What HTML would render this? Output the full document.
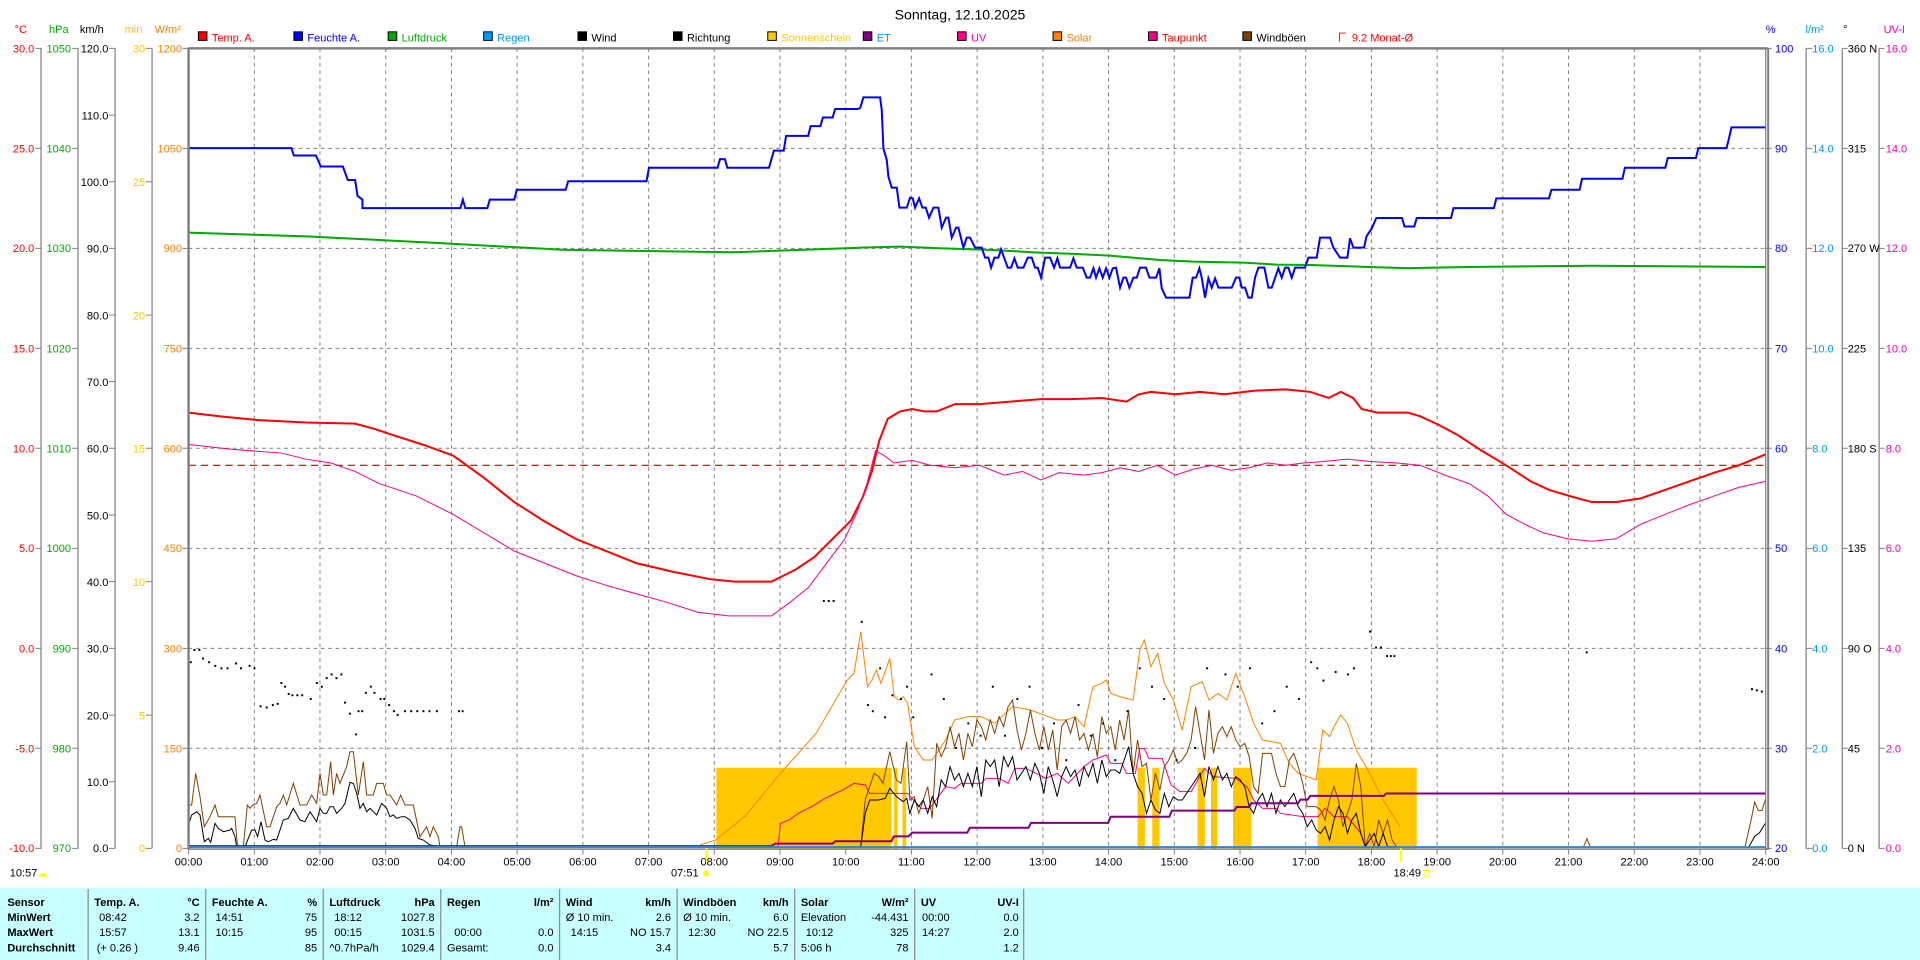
<!DOCTYPE html>
<html><head><meta charset="utf-8"><style>
html,body{margin:0;padding:0;background:#fff;}
svg{display:block;}
text{font-family:"Liberation Sans",sans-serif;font-size:9px;}
.b{font-weight:bold;}
.thin{fill:none;stroke-width:1;vector-effect:non-scaling-stroke;}
.thick{fill:none;stroke-width:2;vector-effect:non-scaling-stroke;}
</style></head><body>
<svg width="1920" height="960" viewBox="0 0 1568 784" xmlns="http://www.w3.org/2000/svg">
<rect width="1568" height="784" fill="#fff"/>
<text x="784" y="16" text-anchor="middle" style="font-size:11.5px">Sonntag, 12.10.2025</text>
<g>
<rect x="162" y="26" width="7" height="7" fill="#f00" stroke="#000" stroke-width="0.8"/><text x="173" y="34" fill="#f00">Temp. A.</text>
<rect x="240" y="26" width="7" height="7" fill="#00f" stroke="#000" stroke-width="0.8"/><text x="251" y="34" fill="#00f">Feuchte A.</text>
<rect x="317" y="26" width="7" height="7" fill="#0a0" stroke="#000" stroke-width="0.8"/><text x="328" y="34" fill="#0a0">Luftdruck</text>
<rect x="395" y="26" width="7" height="7" fill="#09f" stroke="#000" stroke-width="0.8"/><text x="406" y="34" fill="#09f">Regen</text>
<rect x="472" y="26" width="7" height="7" fill="#000" stroke="#000" stroke-width="0.8"/><text x="483" y="34">Wind</text>
<rect x="550" y="26" width="7" height="7" fill="#000" stroke="#000" stroke-width="0.8"/><text x="561" y="34">Richtung</text>
<rect x="627" y="26" width="7" height="7" fill="#ffc800" stroke="#000" stroke-width="0.8"/><text x="638" y="34" fill="#ffc800">Sonnenschein</text>
<rect x="705" y="26" width="7" height="7" fill="#800080" stroke="#000" stroke-width="0.8"/><text x="716" y="34" fill="#09f">ET</text>
<rect x="782" y="26" width="7" height="7" fill="#ff0080" stroke="#000" stroke-width="0.8"/><text x="793" y="34" fill="#f0a">UV</text>
<rect x="860" y="26" width="7" height="7" fill="#ff8000" stroke="#000" stroke-width="0.8"/><text x="871" y="34" fill="#ff8000">Solar</text>
<rect x="938" y="26" width="7" height="7" fill="#ff0080" stroke="#000" stroke-width="0.8"/><text x="949" y="34" fill="#f00">Taupunkt</text>
<rect x="1015" y="26" width="7" height="7" fill="#804000" stroke="#000" stroke-width="0.8"/><text x="1026" y="34">Windböen</text>
<path d="M1094 34V27H1099" fill="none" stroke="#f00" stroke-width="0.8"/><text x="1104" y="34" fill="#f00">9.2 Monat-Ø</text>
</g>
<text x="17" y="27" text-anchor="middle" fill="#f00">°C</text>
<text x="48" y="27" text-anchor="middle" fill="#0a0">hPa</text>
<text x="75" y="27" text-anchor="middle">km/h</text>
<text x="109" y="27" text-anchor="middle" fill="#ffc800">min</text>
<text x="137" y="27" text-anchor="middle" fill="#ff8000">W/m²</text>
<text x="1446" y="27" text-anchor="middle" fill="#00f">%</text>
<text x="1482" y="27" text-anchor="middle" fill="#09f">l/m²</text>
<text x="1507" y="27" text-anchor="middle">°</text>
<text x="1547" y="27" text-anchor="middle" fill="#f0a">UV-I</text>

<g stroke="#808080" stroke-width="1">
<line x1="33.5" y1="39.5" x2="33.5" y2="692.8"/>
<line x1="63.7" y1="39.5" x2="63.7" y2="692.8"/>
<line x1="94" y1="39.5" x2="94" y2="692.8"/>
<line x1="124.2" y1="39.5" x2="124.2" y2="692.8"/>
<line x1="1475" y1="39.5" x2="1475" y2="692.8"/>
<line x1="1504.5" y1="39.5" x2="1504.5" y2="692.8"/>
<line x1="1534.6" y1="39.5" x2="1534.6" y2="692.8"/>
</g>
<g stroke="#808080" stroke-width="0.8" stroke-dasharray="3,3">
<line x1="154" y1="121.2" x2="1442" y2="121.2"/><line x1="154" y1="202.8" x2="1442" y2="202.8"/>
<line x1="154" y1="284.5" x2="1442" y2="284.5"/><line x1="154" y1="366.1" x2="1442" y2="366.1"/>
<line x1="154" y1="447.8" x2="1442" y2="447.8"/><line x1="154" y1="529.5" x2="1442" y2="529.5"/>
<line x1="154" y1="611.1" x2="1442" y2="611.1"/>
<line x1="207.7" y1="39.5" x2="207.7" y2="692.8"/><line x1="261.3" y1="39.5" x2="261.3" y2="692.8"/>
<line x1="315" y1="39.5" x2="315" y2="692.8"/><line x1="368.7" y1="39.5" x2="368.7" y2="692.8"/>
<line x1="422.3" y1="39.5" x2="422.3" y2="692.8"/><line x1="476" y1="39.5" x2="476" y2="692.8"/>
<line x1="529.7" y1="39.5" x2="529.7" y2="692.8"/><line x1="583.3" y1="39.5" x2="583.3" y2="692.8"/>
<line x1="637" y1="39.5" x2="637" y2="692.8"/><line x1="690.7" y1="39.5" x2="690.7" y2="692.8"/>
<line x1="744.3" y1="39.5" x2="744.3" y2="692.8"/><line x1="798" y1="39.5" x2="798" y2="692.8"/>
<line x1="851.7" y1="39.5" x2="851.7" y2="692.8"/><line x1="905.3" y1="39.5" x2="905.3" y2="692.8"/>
<line x1="959" y1="39.5" x2="959" y2="692.8"/><line x1="1012.7" y1="39.5" x2="1012.7" y2="692.8"/>
<line x1="1066.3" y1="39.5" x2="1066.3" y2="692.8"/><line x1="1120" y1="39.5" x2="1120" y2="692.8"/>
<line x1="1173.7" y1="39.5" x2="1173.7" y2="692.8"/><line x1="1227.3" y1="39.5" x2="1227.3" y2="692.8"/>
<line x1="1281" y1="39.5" x2="1281" y2="692.8"/><line x1="1334.7" y1="39.5" x2="1334.7" y2="692.8"/>
<line x1="1388.3" y1="39.5" x2="1388.3" y2="692.8"/>
</g>

<g fill="#f00" text-anchor="end">
<text x="28" y="43">30.0</text><text x="28" y="124.5">25.0</text><text x="28" y="206">20.0</text><text x="28" y="288">15.0</text><text x="28" y="369.5">10.0</text><text x="28" y="451">5.0</text><text x="28" y="533">0.0</text><text x="28" y="614.5">-5.0</text><text x="28" y="696">-10.0</text>
</g>
<g fill="#0a0" text-anchor="end">
<text x="58" y="43">1050</text><text x="58" y="124.5">1040</text><text x="58" y="206">1030</text><text x="58" y="288">1020</text><text x="58" y="369.5">1010</text><text x="58" y="451">1000</text><text x="58" y="533">990</text><text x="58" y="614.5">980</text><text x="58" y="696">970</text>
</g>
<g text-anchor="end">
<text x="88.5" y="43">120.0</text><text x="88.5" y="97.4">110.0</text><text x="88.5" y="151.9">100.0</text><text x="88.5" y="206.3">90.0</text><text x="88.5" y="260.8">80.0</text><text x="88.5" y="315.2">70.0</text><text x="88.5" y="369.6">60.0</text><text x="88.5" y="424.1">50.0</text><text x="88.5" y="478.5">40.0</text><text x="88.5" y="533">30.0</text><text x="88.5" y="587.4">20.0</text><text x="88.5" y="641.8">10.0</text><text x="88.5" y="696">0.0</text>
</g>
<g fill="#ffc800" text-anchor="end">
<text x="118.5" y="43">30</text><text x="118.5" y="151.9">25</text><text x="118.5" y="260.8">20</text><text x="118.5" y="369.6">15</text><text x="118.5" y="478.5">10</text><text x="118.5" y="587.4">5</text><text x="118.5" y="696">0</text>
</g>
<g fill="#ff8000" text-anchor="end">
<text x="148.6" y="43">1200</text><text x="148.6" y="124.5">1050</text><text x="148.6" y="206">900</text><text x="148.6" y="288">750</text><text x="148.6" y="369.5">600</text><text x="148.6" y="451">450</text><text x="148.6" y="533">300</text><text x="148.6" y="614.5">150</text><text x="148.6" y="696">0</text>
</g>
<g stroke="#808080" stroke-width="0.8">
<path d="M29 39.5H34M29 121.2H34M29 202.8H34M29 284.5H34M29 366.1H34M29 447.8H34M29 529.5H34M29 611.1H34M29 692.8H34"/>
<path d="M59 39.5H64M59 121.2H64M59 202.8H64M59 284.5H64M59 366.1H64M59 447.8H64M59 529.5H64M59 611.1H64M59 692.8H64"/>
<path d="M89 39.5H94M89 94H94M89 148.4H94M89 202.8H94M89 257.3H94M89 311.7H94M89 366.1H94M89 420.6H94M89 475H94M89 529.5H94M89 584H94M89 638.4H94M89 692.8H94"/>
<path d="M119 39.5H124M119 148.4H124M119 257.3H124M119 366.1H124M119 475H124M119 584H124M119 692.8H124"/>
<path d="M149 39.5H154M149 121.2H154M149 202.8H154M149 284.5H154M149 366.1H154M149 447.8H154M149 529.5H154M149 611.1H154M149 692.8H154"/>
<path d="M1442 39.5H1447M1442 121.2H1447M1442 202.8H1447M1442 284.5H1447M1442 366.1H1447M1442 447.8H1447M1442 529.5H1447M1442 611.1H1447M1442 692.8H1447"/>
<path d="M1475 39.5H1480M1475 121.2H1480M1475 202.8H1480M1475 284.5H1480M1475 366.1H1480M1475 447.8H1480M1475 529.5H1480M1475 611.1H1480M1475 692.8H1480"/>
<path d="M1504.5 39.5H1509M1504.5 121.2H1509M1504.5 202.8H1509M1504.5 284.5H1509M1504.5 366.1H1509M1504.5 447.8H1509M1504.5 529.5H1509M1504.5 611.1H1509M1504.5 692.8H1509"/>
<path d="M1534.6 39.5H1539M1534.6 121.2H1539M1534.6 202.8H1539M1534.6 284.5H1539M1534.6 366.1H1539M1534.6 447.8H1539M1534.6 529.5H1539M1534.6 611.1H1539M1534.6 692.8H1539"/>
</g>
<g fill="#00f">
<text x="1449.6" y="43">100</text><text x="1449.6" y="124.5">90</text><text x="1449.6" y="206">80</text><text x="1449.6" y="288">70</text><text x="1449.6" y="369.5">60</text><text x="1449.6" y="451">50</text><text x="1449.6" y="533">40</text><text x="1449.6" y="614.5">30</text><text x="1449.6" y="696">20</text>
</g>
<g fill="#09f">
<text x="1480" y="43">16.0</text><text x="1480" y="124.5">14.0</text><text x="1480" y="206">12.0</text><text x="1480" y="288">10.0</text><text x="1480" y="369.5">8.0</text><text x="1480" y="451">6.0</text><text x="1480" y="533">4.0</text><text x="1480" y="614.5">2.0</text><text x="1480" y="696">0.0</text>
</g>
<g>
<text x="1509" y="43">360 N</text><text x="1509" y="124.5">315</text><text x="1509" y="206">270 W</text><text x="1509" y="288">225</text><text x="1509" y="369.5">180 S</text><text x="1509" y="451">135</text><text x="1509" y="533">90  O</text><text x="1509" y="614.5">45</text><text x="1509" y="696">0  N</text>
</g>
<g fill="#f0a">
<text x="1540" y="43">16.0</text><text x="1540" y="124.5">14.0</text><text x="1540" y="206">12.0</text><text x="1540" y="288">10.0</text><text x="1540" y="369.5">8.0</text><text x="1540" y="451">6.0</text><text x="1540" y="533">4.0</text><text x="1540" y="614.5">2.0</text><text x="1540" y="696">0.0</text>
</g>

<g fill="#ffc800">
<rect x="585" y="627" width="143" height="66"/>
<rect x="730" y="627" width="3" height="66"/><rect x="737" y="627" width="3" height="66"/>
<rect x="929" y="627" width="6" height="66"/><rect x="941" y="627" width="6" height="66"/>
<rect x="978" y="627" width="6" height="66"/><rect x="989" y="627" width="5" height="66"/>
<rect x="1007" y="627" width="15" height="66"/>
<rect x="1076" y="627" width="81" height="66"/>
</g>

<line x1="154" y1="380" x2="1442" y2="380" stroke="#c00000" stroke-width="0.9" stroke-dasharray="6,4"/>

<polyline class="thick" stroke="#0a0" points="154,190 250,193 350,198 460,204 600,206 702.4,202.3"/>
<g transform="translate(702.4,73.5) scale(0.2722)"><polyline class="thick" stroke="#0a0" points="0,473 120,470 250,475 400,480 520,487 650,492 750,497 900,510 1000,515 1150,518 1250,524 1350,525 1500,530"/></g>
<polyline class="thick" stroke="#0a0" points="1110.7,217.8 1150,219 1200,218 1300,217 1442,218"/>

<polyline class="thick" stroke="#00f" points="154,121 238,121 240,127 258,127 262,136 280,136 284,147 290,147 292,160 296,163 296,170 376,170 378,163 380,170 398,170 400,163 420,163 422,155 462,155 464,148 528,148 530,137 586,137 588,130 592,130 594,137 628,137 630,130 632,123 640,123 642,111 660,111 662,103 670,103 672,96 680,96 682,89 700,89 702.4,88.5"/>
<g transform="translate(702.4,73.5) scale(0.2722)"><polyline class="thick" stroke="#00f" points="0,55 10,22 60,22 65,60 70,175 80,210 85,260 95,293 110,293 118,353 140,353 150,323 158,325 165,353 177,325 187,353 197,353 207,383 220,353 235,353 245,413 258,383 265,383 275,443 288,413 295,413 310,473 320,443 330,443 345,473 365,473 375,503 385,503 393,533 403,503 415,503 423,478 432,503 443,533 453,533 463,505 473,533 490,533 503,503 515,503 525,533 533,533 543,563 555,503 570,503 582,533 592,505 600,533 630,533 640,505 650,533 668,533 680,563 690,563 700,535 708,563 718,535 728,563 738,535 748,563 758,535 768,533 780,593 790,563 798,563 808,593 820,563 830,563 840,533 858,533 868,563 888,563 898,535 905,595 918,623 988,623 998,563 1008,563 1018,535 1025,563 1035,623 1045,565 1055,593 1065,565 1075,593 1115,593 1128,563 1138,563 1145,593 1155,593 1165,623 1175,623 1185,563 1195,533 1213,533 1225,593 1235,593 1255,535 1265,563 1275,533 1285,533 1295,563 1305,533 1335,533 1345,503 1370,503 1380,443 1410,443 1420,473 1440,503 1462,503 1470,445 1480,473 1500,473"/></g>
<polyline class="thick" stroke="#00f" points="1110.7,202.3 1114,202 1116,193 1120,187 1124,178 1145,178 1147,185 1155,185 1157,178 1185,178 1187,170 1220,170 1222,162 1265,162 1267,155 1290,155 1292,146 1325,146 1327,137 1360,137 1362,129 1385,129 1387,121 1410,121 1412,113 1414,104 1442,104"/>

<polyline class="thick" stroke="#f00" points="154,337 180,340 210,343 250,345 290,346 305,350 320,355 345,363 370,372 395,390 420,410 445,426 470,440 495,450 520,460 550,467 580,473 600,475 630,475 640,470 650,465 665,455 680,440 695,425 705,405 712,385 718,360 725,342 735,336 745,334 755,336 765,336 780,330 800,330 825,328 850,326 875,326 900,325 920,328 930,322 940,320 960,322 980,320 1000,322 1025,319 1050,318 1070,320 1085,325 1095,320 1105,325 1112,334 1125,337 1150,337 1160,340 1175,347 1190,355 1210,368 1230,380 1250,393 1265,400 1285,406 1300,410 1320,410 1340,407 1360,400 1380,393 1400,386 1420,380 1442,371"/>
<polyline class="thin" stroke="#ff0080" points="154,363 190,367 230,370 250,375 270,378 290,385 310,395 340,405 370,420 395,435 420,450 445,460 470,470 495,478 520,485 545,492 570,500 595,503 630,503 645,492 660,480 675,460 690,440 700,418 708,395 715,368 722,372 730,378 745,376 760,380 780,382 800,380 820,388 835,385 850,392 865,386 885,388 900,386 915,382 930,385 945,380 960,388 975,383 990,380 1005,384 1020,382 1035,378 1050,380 1065,378 1080,377 1100,375 1120,377 1140,378 1160,380 1180,388 1200,395 1215,405 1230,420 1245,428 1260,435 1280,440 1300,442 1320,440 1340,428 1360,420 1380,412 1400,405 1420,398 1442,393"/>

<g transform="translate(571.7,490) scale(0.3646,0.2722)">
<polyline class="thin" stroke="#ff8000" points="0,735 35,720 100,650 180,520 260,400 330,240 345,220 360,95 375,260 385,240 395,210 405,250 425,175 435,290 445,300 455,290 465,310 480,440 500,480 520,480 550,420 570,360 600,350 630,350 660,370 700,320 740,330 780,350 800,360 820,360 840,350 860,380 880,260 900,250 910,240 920,280 940,290 970,300 985,150 995,120 1010,200 1025,160 1040,250 1060,300 1080,390 1100,260 1125,245 1140,300 1160,280 1180,300 1200,220 1220,290 1240,370 1260,420 1300,430 1320,490 1340,520 1360,530 1380,540 1395,390 1410,410 1420,380 1435,345 1450,370 1470,450 1500,520 1530,600 1568,680"/>
<polyline class="thin" stroke="#ff0080" points="0,740 175,740 180,670 200,660 220,640 250,620 280,595 320,570 345,550 370,555 380,580 430,580 465,580 495,625 515,625 550,560 570,565 585,550 630,550 640,535 670,535 690,550 705,505 730,505 775,535 800,520 825,550 860,500 880,480 910,465 920,490 945,490 955,520 975,520 985,445 995,445 1005,475 1035,475 1055,555 1075,575 1100,575 1130,505 1150,530 1200,535 1225,560 1240,600 1260,625 1290,625 1300,640 1350,650 1385,650 1400,625 1420,650 1450,650 1480,700 1490,740"/>
<polyline class="thin" stroke="#804000" points="300,740 320,740 360,740 370,600 380,560 390,520 400,530 410,550 425,455 440,540 450,550 463,425 470,600 480,590 490,640 500,600 510,560 520,655 530,430 540,470 550,440 560,380 570,440 580,400 590,480 600,400 610,440 620,360 630,380 640,420 650,360 660,400 670,350 680,380 690,320 700,300 710,390 720,450 730,400 740,330 750,400 760,450 770,380 780,450 790,390 800,510 810,380 820,360 830,400 840,350 850,420 860,400 870,450 880,400 890,470 900,350 910,400 920,380 930,450 940,360 950,420 960,330 970,520 980,420 990,500 1000,490 1010,600 1020,520 1030,570 1040,500 1050,480 1060,450 1070,490 1080,480 1090,460 1100,420 1110,320 1120,400 1130,480 1140,330 1150,460 1160,400 1170,380 1180,410 1190,380 1200,420 1210,440 1220,430 1230,470 1240,560 1250,580 1260,460 1280,460 1290,520 1300,560 1310,560 1320,480 1330,460 1340,500 1350,550 1360,620 1380,620 1390,630 1400,660 1410,600 1420,560 1430,600 1440,680 1450,640 1460,600 1470,490 1480,560 1490,740 1500,700 1510,740 1520,660 1530,700 1540,660 1550,720 1560,740"/>
<polyline class="thin" stroke="#000" points="360,740 370,640 380,600 400,600 415,595 425,565 440,590 455,605 463,595 470,640 480,600 490,620 500,600 510,640 520,590 530,620 540,540 550,560 560,500 570,540 580,520 590,560 600,520 610,560 620,500 630,590 640,480 650,500 660,480 670,560 680,470 690,500 700,470 710,540 720,520 730,500 740,540 750,490 760,520 770,580 780,500 790,540 800,590 810,530 820,500 830,530 840,510 850,560 860,500 870,530 880,490 890,550 900,480 910,530 920,510 930,510 940,520 950,480 960,440 970,520 980,560 990,580 1000,640 1010,600 1020,630 1030,640 1040,580 1050,620 1060,590 1070,600 1080,600 1090,580 1100,560 1110,540 1120,520 1130,590 1140,500 1150,540 1160,500 1170,540 1180,520 1190,560 1200,530 1210,540 1220,560 1230,620 1240,640 1250,600 1260,580 1270,620 1280,580 1290,640 1300,600 1310,620 1320,600 1330,580 1340,620 1350,640 1360,680 1370,660 1380,690 1390,700 1400,680 1410,720 1420,660 1430,620 1440,640 1450,700 1460,660 1470,640 1480,700 1490,740 1500,720 1510,700 1520,740 1530,700 1540,740 1560,740"/>
</g>
<g transform="translate(130.67,522.7) scale(0.2722)">
<polyline class="thin" stroke="#804000" points="85,495 95,495 107,400 120,470 133,560 150,530 165,495 175,530 225,530 232,615 250,620 262,495 270,505 278,495 290,490 300,465 320,560 330,560 350,500 360,490 370,465 380,495 400,430 420,495 440,495 455,465 470,490 480,400 490,465 500,465 512,365 520,465 530,400 540,430 560,380 570,335 580,335 595,465 610,365 620,465 640,465 650,430 670,430 680,465 690,465 710,495 722,465 735,495 760,495 780,590 800,560 810,590 820,560 835,590 840,620 890,620 900,560 905,560 915,620"/>
<polyline class="thin" stroke="#000" points="85,555 95,525 110,515 120,525 133,605 145,595 152,607 165,550 175,565 190,575 210,570 215,565 225,590 230,620 255,620 275,570 285,570 293,590 303,545 315,600 325,605 340,598 350,600 360,570 370,540 385,535 400,505 420,540 435,545 450,515 470,545 480,505 490,520 500,520 510,500 520,500 530,520 545,505 555,490 570,427 580,430 590,460 600,505 610,490 620,515 630,505 640,515 650,525 665,490 680,505 690,530 700,525 710,535 725,530 735,530 750,540 765,565 775,595 790,600 810,615 840,620"/>
</g>
<polyline class="thin" stroke="#804000" points="1293,692 1296,685 1299,692"/>
<polyline class="thin" stroke="#804000" points="1425,692 1430,670 1433,655 1436,662 1439,662 1442,652"/>
<polyline class="thin" stroke="#000" points="1428,692 1433,683 1437,680 1440,675 1442,672"/>
<polyline class="thick" stroke="#800080" points="154,691 630,691 633,689 680,689 682,687 728,687 730,683 742,683 745,680 790,680 792,676 840,676 842,672 905,672 907,667 955,667 957,662 1008,662 1010,659 1020,659 1022,656 1060,656 1062,653 1068,653 1070,650 1130,650 1132,648 1442,648"/>
<line x1="154" y1="691.8" x2="1442" y2="691.8" stroke="#2a8ad6" stroke-width="1.6"/>

<g fill="#000">
<rect x="155" y="540" width="1.6" height="1.6"/><rect x="158" y="530" width="1.6" height="1.6"/><rect x="162" y="530" width="1.6" height="1.6"/><rect x="165" y="537" width="1.6" height="1.6"/><rect x="170" y="540" width="1.6" height="1.6"/><rect x="175" y="543" width="1.6" height="1.6"/><rect x="180" y="545" width="1.6" height="1.6"/><rect x="185" y="545" width="1.6" height="1.6"/><rect x="192" y="541" width="1.6" height="1.6"/><rect x="196" y="545" width="1.6" height="1.6"/><rect x="203" y="543" width="1.6" height="1.6"/><rect x="207" y="545" width="1.6" height="1.6"/><rect x="212" y="576" width="1.6" height="1.6"/><rect x="217" y="577" width="1.6" height="1.6"/><rect x="222" y="575" width="1.6" height="1.6"/><rect x="226" y="574" width="1.6" height="1.6"/><rect x="229" y="557" width="1.6" height="1.6"/><rect x="232" y="560" width="1.6" height="1.6"/><rect x="235" y="566" width="1.6" height="1.6"/><rect x="238" y="567" width="1.6" height="1.6"/><rect x="242" y="567" width="1.6" height="1.6"/><rect x="246" y="567" width="1.6" height="1.6"/><rect x="253" y="570" width="1.6" height="1.6"/><rect x="258" y="557" width="1.6" height="1.6"/><rect x="262" y="560" width="1.6" height="1.6"/><rect x="266" y="553" width="1.6" height="1.6"/><rect x="270" y="550" width="1.6" height="1.6"/><rect x="274" y="553" width="1.6" height="1.6"/><rect x="278" y="550" width="1.6" height="1.6"/><rect x="281" y="573" width="1.6" height="1.6"/><rect x="285" y="582" width="1.6" height="1.6"/><rect x="290" y="599" width="1.6" height="1.6"/><rect x="292" y="580" width="1.6" height="1.6"/><rect x="295" y="580" width="1.6" height="1.6"/><rect x="298" y="565" width="1.6" height="1.6"/><rect x="302" y="560" width="1.6" height="1.6"/><rect x="305" y="565" width="1.6" height="1.6"/><rect x="310" y="570" width="1.6" height="1.6"/><rect x="313" y="570" width="1.6" height="1.6"/><rect x="317" y="575" width="1.6" height="1.6"/><rect x="321" y="580" width="1.6" height="1.6"/><rect x="324" y="583" width="1.6" height="1.6"/><rect x="330" y="580" width="1.6" height="1.6"/><rect x="335" y="580" width="1.6" height="1.6"/><rect x="340" y="580" width="1.6" height="1.6"/><rect x="345" y="580" width="1.6" height="1.6"/><rect x="350" y="580" width="1.6" height="1.6"/><rect x="356" y="580" width="1.6" height="1.6"/><rect x="374" y="580" width="1.6" height="1.6"/><rect x="377" y="580" width="1.6" height="1.6"/>
<rect x="672" y="490" width="1.6" height="1.6"/><rect x="676" y="490" width="1.6" height="1.6"/><rect x="680" y="490" width="1.6" height="1.6"/><rect x="703" y="507" width="1.6" height="1.6"/><rect x="708" y="575" width="1.6" height="1.6"/><rect x="712" y="580" width="1.6" height="1.6"/><rect x="718" y="545" width="1.6" height="1.6"/><rect x="722" y="585" width="1.6" height="1.6"/><rect x="728" y="567" width="1.6" height="1.6"/><rect x="735" y="570" width="1.6" height="1.6"/><rect x="740" y="560" width="1.6" height="1.6"/><rect x="745" y="585" width="1.6" height="1.6"/><rect x="760" y="550" width="1.6" height="1.6"/><rect x="770" y="570" width="1.6" height="1.6"/><rect x="780" y="610" width="1.6" height="1.6"/><rect x="790" y="590" width="1.6" height="1.6"/><rect x="800" y="600" width="1.6" height="1.6"/><rect x="810" y="560" width="1.6" height="1.6"/><rect x="820" y="600" width="1.6" height="1.6"/><rect x="830" y="570" width="1.6" height="1.6"/><rect x="840" y="560" width="1.6" height="1.6"/><rect x="850" y="610" width="1.6" height="1.6"/><rect x="860" y="590" width="1.6" height="1.6"/><rect x="870" y="620" width="1.6" height="1.6"/><rect x="880" y="575" width="1.6" height="1.6"/><rect x="890" y="600" width="1.6" height="1.6"/><rect x="900" y="590" width="1.6" height="1.6"/><rect x="910" y="620" width="1.6" height="1.6"/><rect x="920" y="580" width="1.6" height="1.6"/><rect x="930" y="545" width="1.6" height="1.6"/><rect x="940" y="560" width="1.6" height="1.6"/><rect x="950" y="570" width="1.6" height="1.6"/><rect x="960" y="620" width="1.6" height="1.6"/><rect x="975" y="610" width="1.6" height="1.6"/><rect x="985" y="545" width="1.6" height="1.6"/><rect x="1000" y="550" width="1.6" height="1.6"/><rect x="1010" y="560" width="1.6" height="1.6"/><rect x="1020" y="545" width="1.6" height="1.6"/><rect x="1030" y="590" width="1.6" height="1.6"/><rect x="1040" y="580" width="1.6" height="1.6"/><rect x="1050" y="560" width="1.6" height="1.6"/><rect x="1060" y="570" width="1.6" height="1.6"/><rect x="1070" y="540" width="1.6" height="1.6"/><rect x="1075" y="545" width="1.6" height="1.6"/><rect x="1080" y="555" width="1.6" height="1.6"/><rect x="1090" y="548" width="1.6" height="1.6"/><rect x="1100" y="550" width="1.6" height="1.6"/><rect x="1105" y="545" width="1.6" height="1.6"/><rect x="1118" y="515" width="1.6" height="1.6"/><rect x="1123" y="528" width="1.6" height="1.6"/><rect x="1127" y="528" width="1.6" height="1.6"/><rect x="1132" y="535" width="1.6" height="1.6"/><rect x="1135" y="535" width="1.6" height="1.6"/><rect x="1138" y="535" width="1.6" height="1.6"/><rect x="1295" y="532" width="1.6" height="1.6"/><rect x="1430" y="562" width="1.6" height="1.6"/><rect x="1434" y="563" width="1.6" height="1.6"/><rect x="1438" y="564" width="1.6" height="1.6"/>
</g>

<g stroke="#808080" fill="none">
<line x1="154" y1="39.5" x2="1443.5" y2="39.5" stroke-width="2"/>
<line x1="154" y1="39" x2="154" y2="694" stroke-width="2"/>
<line x1="1442" y1="39" x2="1442" y2="694" stroke-width="1"/>
<line x1="1444" y1="39" x2="1444" y2="694" stroke-width="1.6"/>
<line x1="154" y1="693.5" x2="1444" y2="693.5" stroke-width="1.2"/>
</g>
<g stroke="#808080" stroke-width="0.8">
<path d="M154 693V698M207.7 693V698M261.3 693V698M315 693V698M368.7 693V698M422.3 693V698M476 693V698M529.7 693V698M583.3 693V698M637 693V698M690.7 693V698M744.3 693V698M798 693V698M851.7 693V698M905.3 693V698M959 693V698M1012.7 693V698M1066.3 693V698M1120 693V698M1173.7 693V698M1227.3 693V698M1281 693V698M1334.7 693V698M1388.3 693V698M1442 693V698"/>
</g>
<g text-anchor="middle">
<text x="154" y="707">00:00</text><text x="207.7" y="707">01:00</text><text x="261.3" y="707">02:00</text><text x="315" y="707">03:00</text><text x="368.7" y="707">04:00</text><text x="422.3" y="707">05:00</text><text x="476" y="707">06:00</text><text x="529.7" y="707">07:00</text><text x="583.3" y="707">08:00</text><text x="637" y="707">09:00</text><text x="690.7" y="707">10:00</text><text x="744.3" y="707">11:00</text><text x="798" y="707">12:00</text><text x="851.7" y="707">13:00</text><text x="905.3" y="707">14:00</text><text x="959" y="707">15:00</text><text x="1012.7" y="707">16:00</text><text x="1066.3" y="707">17:00</text><text x="1120" y="707">18:00</text><text x="1173.7" y="707">19:00</text><text x="1227.3" y="707">20:00</text><text x="1281" y="707">21:00</text><text x="1334.7" y="707">22:00</text><text x="1388.3" y="707">23:00</text><text x="1442" y="707">24:00</text>
</g>
<line x1="577" y1="693" x2="577" y2="704" stroke="#ff0" stroke-width="1.6"/>
<line x1="1144" y1="693" x2="1144" y2="704" stroke="#ff0" stroke-width="1.6"/>
<text x="8" y="716">10:57</text><path d="M32 716a3.2 3 0 0 1 6.4 0z" fill="#ff0"/>
<text x="548" y="716">07:51</text><circle cx="576.5" cy="713.5" r="2.4" fill="#ff0"/>
<text x="1138" y="716">18:49</text><rect x="1163" y="711" width="4.5" height="4.5" fill="none" stroke="#ff0" stroke-width="0.9"/>

<rect x="0" y="725" width="1568" height="59" fill="#c8ffff"/>
<g stroke="#8a8a8a" stroke-width="1">
<line x1="72" y1="726" x2="72" y2="784"/><line x1="168" y1="726" x2="168" y2="784"/><line x1="264" y1="726" x2="264" y2="784"/><line x1="360" y1="726" x2="360" y2="784"/><line x1="457" y1="726" x2="457" y2="784"/><line x1="553" y1="726" x2="553" y2="784"/><line x1="649" y1="726" x2="649" y2="784"/><line x1="747" y1="726" x2="747" y2="784"/><line x1="836" y1="726" x2="836" y2="784"/>
</g>
<g>
<text x="6" y="740" class="b">Sensor</text><text x="6" y="752" class="b">MinWert</text><text x="6" y="764.5" class="b">MaxWert</text><text x="6" y="777" class="b">Durchschnitt</text>
<text x="77" y="740" class="b">Temp. A.</text><text x="163" y="740" text-anchor="end" class="b">°C</text>
<text x="173" y="740" class="b">Feuchte A.</text><text x="259" y="740" text-anchor="end" class="b">%</text>
<text x="269" y="740" class="b">Luftdruck</text><text x="355" y="740" text-anchor="end" class="b">hPa</text>
<text x="365" y="740" class="b">Regen</text><text x="452" y="740" text-anchor="end" class="b">l/m²</text>
<text x="462" y="740" class="b">Wind</text><text x="548" y="740" text-anchor="end" class="b">km/h</text>
<text x="558" y="740" class="b">Windböen</text><text x="644" y="740" text-anchor="end" class="b">km/h</text>
<text x="654" y="740" class="b">Solar</text><text x="742" y="740" text-anchor="end" class="b">W/m²</text>
<text x="752" y="740" class="b">UV</text><text x="832" y="740" text-anchor="end" class="b">UV-I</text>
</g>
<g>
<text x="81" y="752">08:42</text><text x="163" y="752" text-anchor="end">3.2</text>
<text x="81" y="764.5">15:57</text><text x="163" y="764.5" text-anchor="end">13.1</text>
<text x="79" y="777">(+ 0.26 )</text><text x="163" y="777" text-anchor="end">9.46</text>
<text x="176" y="752">14:51</text><text x="259" y="752" text-anchor="end">75</text>
<text x="176" y="764.5">10:15</text><text x="259" y="764.5" text-anchor="end">95</text>
<text x="259" y="777" text-anchor="end">85</text>
<text x="273" y="752">18:12</text><text x="355" y="752" text-anchor="end">1027.8</text>
<text x="273" y="764.5">00:15</text><text x="355" y="764.5" text-anchor="end">1031.5</text>
<text x="269" y="777">^0.7hPa/h</text><text x="355" y="777" text-anchor="end">1029.4</text>
<text x="371" y="764.5">00:00</text><text x="452" y="764.5" text-anchor="end">0.0</text>
<text x="365" y="777">Gesamt:</text><text x="452" y="777" text-anchor="end">0.0</text>
<text x="462" y="752">Ø 10 min.</text><text x="548" y="752" text-anchor="end">2.6</text>
<text x="466" y="764.5">14:15</text><text x="548" y="764.5" text-anchor="end">NO 15.7</text>
<text x="548" y="777" text-anchor="end">3.4</text>
<text x="558" y="752">Ø 10 min.</text><text x="644" y="752" text-anchor="end">6.0</text>
<text x="562" y="764.5">12:30</text><text x="644" y="764.5" text-anchor="end">NO 22.5</text>
<text x="644" y="777" text-anchor="end">5.7</text>
<text x="654" y="752">Elevation</text><text x="742" y="752" text-anchor="end">-44.431</text>
<text x="658" y="764.5">10:12</text><text x="742" y="764.5" text-anchor="end">325</text>
<text x="654" y="777">5:06 h</text><text x="742" y="777" text-anchor="end">78</text>
<text x="753" y="752">00:00</text><text x="832" y="752" text-anchor="end">0.0</text>
<text x="753" y="764.5">14:27</text><text x="832" y="764.5" text-anchor="end">2.0</text>
<text x="832" y="777" text-anchor="end">1.2</text>
</g>
</svg>
</body></html>
